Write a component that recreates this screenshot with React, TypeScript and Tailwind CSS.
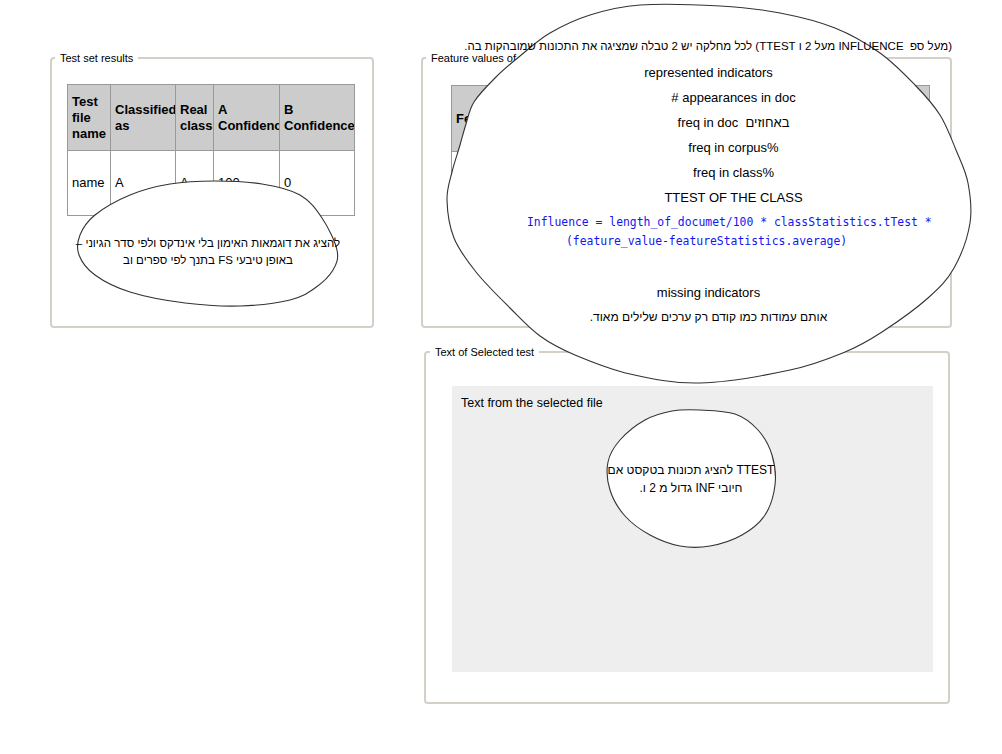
import React from 'react';

type Pt = [number, number];

// closed catmull-rom curve through the given points
const smoothPath = (pts: Pt[]): string => {
  const n = pts.length;
  let d = `M${pts[0][0]},${pts[0][1]}`;
  for (let i = 0; i < n; i++) {
    const p0 = pts[(i - 1 + n) % n];
    const p1 = pts[i];
    const p2 = pts[(i + 1) % n];
    const p3 = pts[(i + 2) % n];
    const c1x = p1[0] + (p2[0] - p0[0]) / 6;
    const c1y = p1[1] + (p2[1] - p0[1]) / 6;
    const c2x = p2[0] - (p3[0] - p1[0]) / 6;
    const c2y = p2[1] - (p3[1] - p1[1]) / 6;
    d += ` C${c1x.toFixed(1)},${c1y.toFixed(1)} ${c2x.toFixed(1)},${c2y.toFixed(1)} ${p2[0]},${p2[1]}`;
  }
  return d + ' Z';
};

const leftBubble: Pt[] = [
  [170, 184], [215, 181], [262, 184], [300, 195], [322, 218], [337, 250], [333, 270],
  [315, 288], [290, 300], [240, 306], [185, 303], [130, 292], [95, 275], [79, 255],
  [80, 235], [95, 215], [130, 195],
];

const bigBubble: Pt[] = [
  [640, 5], [720, 6], [780, 13], [835, 28], [880, 53], [915, 85], [940, 115], [956, 150],
  [968, 183], [970, 223], [954, 268], [928, 298], [882, 332], [845, 352], [790, 370],
  [700, 383], [630, 374], [575, 355], [540, 336], [510, 308], [476, 272], [454, 238],
  [447, 200], [452, 172], [460, 145], [466, 124], [474, 102], [495, 78], [520, 56],
  [550, 33], [590, 15],
];

const textBubble: Pt[] = [
  [700, 410], [735, 414], [758, 430], [772, 455], [775, 485], [765, 515], [742, 535],
  [710, 546], [680, 546], [650, 535], [625, 516], [610, 490], [608, 462], [620, 440],
  [645, 420], [672, 411],
];

const cols = [43, 65, 38, 66, 75];

const ResultsTable = () => (
  <table className="table-fixed border-collapse w-[288px] text-[13px] leading-[16px]">
    <colgroup>
      {cols.map((w, i) => (
        <col key={i} style={{ width: w }} />
      ))}
    </colgroup>
    <thead>
      <tr className="h-[66px] bg-[#cccccc] font-bold">
        <th className="border border-[#999999] px-[4px] text-left overflow-hidden">Test file name</th>
        <th className="border border-[#999999] px-[4px] text-left overflow-hidden">Classified as</th>
        <th className="border border-[#999999] px-[4px] text-left overflow-hidden">Real class</th>
        <th className="border border-[#999999] px-[4px] text-left overflow-hidden">A Confidence</th>
        <th className="border border-[#999999] px-[4px] text-left overflow-hidden">B Confidence</th>
      </tr>
    </thead>
    <tbody>
      <tr className="h-[65px]">
        <td className="border border-[#999999] px-[4px] overflow-hidden">name</td>
        <td className="border border-[#999999] px-[4px] overflow-hidden">A</td>
        <td className="border border-[#999999] px-[4px] overflow-hidden">A</td>
        <td className="border border-[#999999] px-[4px] overflow-hidden">100</td>
        <td className="border border-[#999999] px-[4px] overflow-hidden">0</td>
      </tr>
    </tbody>
  </table>
);

const FeatureTable = () => (
  <table className="table-fixed border-collapse w-[479px] text-[13px] leading-[16px]">
    <thead>
      <tr className="h-[66px] bg-[#cccccc] font-bold">
        <th className="border border-[#999999] px-[4px] text-left overflow-hidden">Feature</th>
        <th className="border border-[#999999] px-[4px] text-left overflow-hidden">Value</th>
        <th className="border border-[#999999] px-[4px] text-left overflow-hidden">Average</th>
        <th className="border border-[#999999] px-[4px] text-left overflow-hidden">Influence</th>
      </tr>
    </thead>
    <tbody>
      <tr className="h-[65px]">
        <td className="border border-[#999999]" />
        <td className="border border-[#999999]" />
        <td className="border border-[#999999]" />
        <td className="border border-[#999999]" />
      </tr>
    </tbody>
  </table>
);

const App: React.FC = () => {
  return (
    <div className="relative w-[1002px] h-[754px] overflow-hidden bg-white text-black font-['Liberation_Sans',Arial,sans-serif]">
      <div className="flex items-start pt-[51px] pl-[50px]">
        <fieldset className="w-[324px] h-[277px] border-2 border-[#d4d0c8] rounded-[4px]">
          <legend className="ml-[3px] px-[5px] text-[11px] leading-[14px]">Test set results</legend>
          <div className="mt-[19px] ml-[15px]">
            <ResultsTable />
          </div>
        </fieldset>

        <div className="ml-[47px] flex flex-col">
          <fieldset className="w-[531px] h-[277px] border-2 border-[#d4d0c8] rounded-[4px]">
            <legend className="ml-[3px] px-[5px] text-[11px] leading-[14px]">Feature values of</legend>
            <div className="mt-[20px] ml-[28px]">
              <FeatureTable />
            </div>
          </fieldset>

          <fieldset className="mt-[17px] ml-[3px] w-[526px] h-[359px] border-2 border-[#d4d0c8] rounded-[4px]">
            <legend className="ml-[4px] px-[5px] text-[11px] leading-[14px]">Text of Selected test</legend>
            <div className="mt-[27px] ml-[26px] w-[481px] h-[286px] bg-[#eeeeee] pt-[10px] pl-[9px] text-[12.5px] leading-[15px]">
              Text from the selected file
            </div>
          </fieldset>
        </div>
      </div>

      {/* callout bubbles */}
      <svg className="absolute inset-0 pointer-events-none" width="1002" height="754" viewBox="0 0 1002 754">
        <path d={smoothPath(leftBubble)} fill="#ffffff" stroke="#333333" strokeWidth={1.1} />
        <path d={smoothPath(bigBubble)} fill="#ffffff" stroke="#333333" strokeWidth={1.1} />
        <path d={smoothPath(textBubble)} fill="#ffffff" stroke="#333333" strokeWidth={1.1} />
      </svg>

      <div className="absolute left-[78px] top-[235px] w-[260px] flex flex-col items-center text-[11.5px] leading-[17px] whitespace-nowrap">
        <div dir="rtl">להציג את דוגמאות האימון בלי אינדקס ולפי סדר הגיוני –</div>
        <div dir="rtl">באופן טיבעי FS בתנך לפי ספרים וב</div>
      </div>

      <div className="absolute left-[447px] top-[60px] w-[523px] flex flex-col text-[13px] whitespace-nowrap">
        <div className="h-[25px] leading-[25px] text-center">represented indicators</div>
        <div className="h-[25px] leading-[25px] text-center pl-[50px]"># appearances in doc</div>
        <div className="h-[25px] leading-[25px] text-center pl-[50px] whitespace-pre">freq in doc  באחוזים</div>
        <div className="h-[25px] leading-[25px] text-center pl-[50px]">freq in corpus%</div>
        <div className="h-[25px] leading-[25px] text-center pl-[50px]">freq in class%</div>
        <div className="h-[25px] leading-[25px] text-center pl-[50px]">TTEST OF THE CLASS</div>
        <div className="mt-[3px] font-['DejaVu_Sans_Mono',monospace] text-[11.4px] leading-[19px] text-[#1515f0]">
          <div className="pl-[80px]">Influence = length_of_documet/100 * classStatistics.tTest *</div>
          <div className="pl-[119px]">(feature_value-featureStatistics.average)</div>
        </div>
        <div className="mt-[29px] h-[25px] leading-[25px] text-center">missing indicators</div>
        <div className="h-[25px] leading-[25px] text-center text-[12px]" dir="rtl">אותם עמודות כמו קודם רק ערכים שלילים מאוד.</div>
      </div>

      <div dir="rtl" className="absolute right-[50px] top-[38px] text-[11.5px] leading-[16px] whitespace-pre">
        (מעל ספ  INFLUENCE מעל 2 ו TTEST) לכל מחלקה יש 2 טבלה שמציגה את התכונות שמובהקות בה.
      </div>

      <div className="absolute left-[607px] top-[461px] w-[168px] flex flex-col items-center text-[12px] leading-[18px] whitespace-nowrap">
        <div dir="rtl">TTEST להציג תכונות בטקסט אם</div>
        <div dir="rtl">חיובי INF גדול מ 2 ו.</div>
      </div>
    </div>
  );
};

export default App;
